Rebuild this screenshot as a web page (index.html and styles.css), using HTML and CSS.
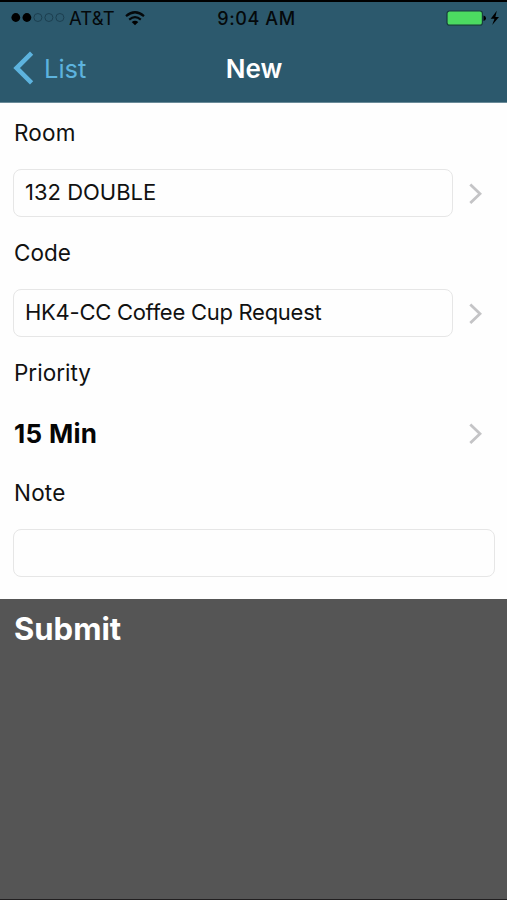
FILE: index.html
```html
<!DOCTYPE html>
<html lang="en">
<head>
<meta charset="utf-8">
<title>New</title>
<link rel="stylesheet" href="styles.css">
</head>
<body>
<div class="screen">
  <header class="header">
    <div class="status">
      <div class="carrier">
        <svg class="signal" width="54" height="12" viewBox="0 0 54 12"><circle cx="4.8" cy="5.5" r="4.4"/><circle cx="15.9" cy="5.5" r="4.4"/><g class="empty"><circle cx="26.9" cy="5.5" r="4"/><circle cx="37.9" cy="5.5" r="4"/><circle cx="48.9" cy="5.5" r="4"/></g></svg>
        <span class="carrier-name">AT&amp;T</span>
        <svg class="wifi" width="20" height="15" viewBox="0 0 20 15"><path class="arc" d="M1 5.1Q10-2.6 19 5.1M4.2 8.6Q10 3.7 15.8 8.6"/><path d="M6.7 11Q10 8.5 13.3 11L10 14.2Z"/></svg>
      </div>
      <span class="time">9:04 AM</span>
      <div class="power">
        <svg width="54" height="18" viewBox="0 0 54 18"><rect class="battery" x="1" y="2" width="35.4" height="14.2" rx="2.5"/><path d="M37.5 6.5Q40 7 40 9.2T37.5 12Z"/><path d="M50.8 1.8L44.7 9.8H48.5L46.2 16L53 8.1H49.4Z"/></svg>
      </div>
    </div>
    <nav class="nav">
      <a class="back"><svg width="21" height="34" viewBox="0 0 21 34"><path d="M18.6 2.2L3.6 17L18.6 31.8"/></svg><span>List</span></a>
      <h1 class="title">New</h1>
    </nav>
  </header>
  <main class="form">
    <label class="label room">Room</label>
    <div class="row"><div class="field"><span class="double">132 DOUBLE</span></div><svg class="chevron" width="13" height="22" viewBox="0 0 13 22"><path d="M1.3 2.6L11 11.8L1.3 21"/></svg></div>
    <label class="label code">Code</label>
    <div class="row"><div class="field"><span class="request">HK4-CC Coffee Cup Request</span></div><svg class="chevron" width="13" height="22" viewBox="0 0 13 22"><path d="M1.3 2.6L11 11.8L1.3 21"/></svg></div>
    <label class="label priority">Priority</label>
    <div class="row"><strong class="value">15 Min</strong><svg class="chevron" width="13" height="22" viewBox="0 0 13 22"><path d="M1.3 2.6L11 11.8L1.3 21"/></svg></div>
    <label class="label note">Note</label>
    <div class="row wide"><div class="field"></div></div>
  </main>
  <footer class="footer"><span class="submit">Submit</span></footer>
</div>
</body>
</html>
```
FILE: styles.css
```css
* { box-sizing: border-box; }
body { margin: 0; font-family: Inter, "Liberation Sans", sans-serif; color: #111; }
svg { display: block; flex: none; }
.screen { width: 507px; height: 900px; display: flex; flex-direction: column; background: #fefefe; overflow: hidden; }
.header { height: 103px; flex: none; background: #2c596d; border-top: 2px solid #000; border-bottom: 1px solid #6a8b99; }
.status { height: 32px; display: grid; grid-template-columns: 1fr auto 1fr; align-items: center; padding: 0 7px 0 11px; color: #05090b; }
.carrier { display: flex; align-items: center; }
.signal .empty { fill: none; stroke: #1c3f50; stroke-width: 1; }
.carrier-name { font-size: 18.5px; margin-left: 4px; letter-spacing: 0.1px; }
.wifi { margin-left: 10px; }
.wifi .arc { fill: none; stroke: #05090b; stroke-width: 2.2; }
.time { font-size: 18px; font-weight: 500; letter-spacing: 0.6px; padding-left: 2px; }
.power { justify-self: end; }
.battery { fill: #4cdb61; stroke: #173b3e; stroke-width: 1.2; }
.nav { height: 68px; display: grid; grid-template-columns: 1fr auto 1fr; align-items: center; padding: 0 13px; }
.back { display: flex; align-items: center; gap: 10px; color: #5db3de; font-size: 25.5px; }
.back path { fill: none; stroke: #5db3de; stroke-width: 4.6; }
.title { margin: 0; padding: 2px 0 0 1px; color: #fff; font-size: 26px; font-weight: 600; line-height: 34px; }
.form { height: 496px; flex: none; padding: 0 12px 16px 13px; }
.label { display: flex; align-items: center; height: 60px; padding: 0 0 2px 1px; font-size: 22.5px; }
.room, .note { letter-spacing: 0.2px; }
.row { height: 60px; display: flex; align-items: center; justify-content: space-between; padding-right: 13px; }
.wide { padding-right: 0; }
.field { width: 440px; height: 48px; border: 1px solid #e6e6e6; border-radius: 8px; display: flex; align-items: center; padding: 0 0 2px 11px; font-size: 22px; }
.request { letter-spacing: -0.27px; }
.wide .field { width: 100%; }
.chevron path { fill: none; stroke: #c4c4c6; stroke-width: 2.8; }
.value { font-size: 26px; font-weight: 700; color: #050505; padding-left: 1px; letter-spacing: 0.3px; }
.footer { flex: 1; background: #555; border-bottom: 1px solid #211f20; padding: 10px 14px; color: #fff; }
.submit { display: block; font-size: 31px; font-weight: 700; line-height: 40px; }
```
